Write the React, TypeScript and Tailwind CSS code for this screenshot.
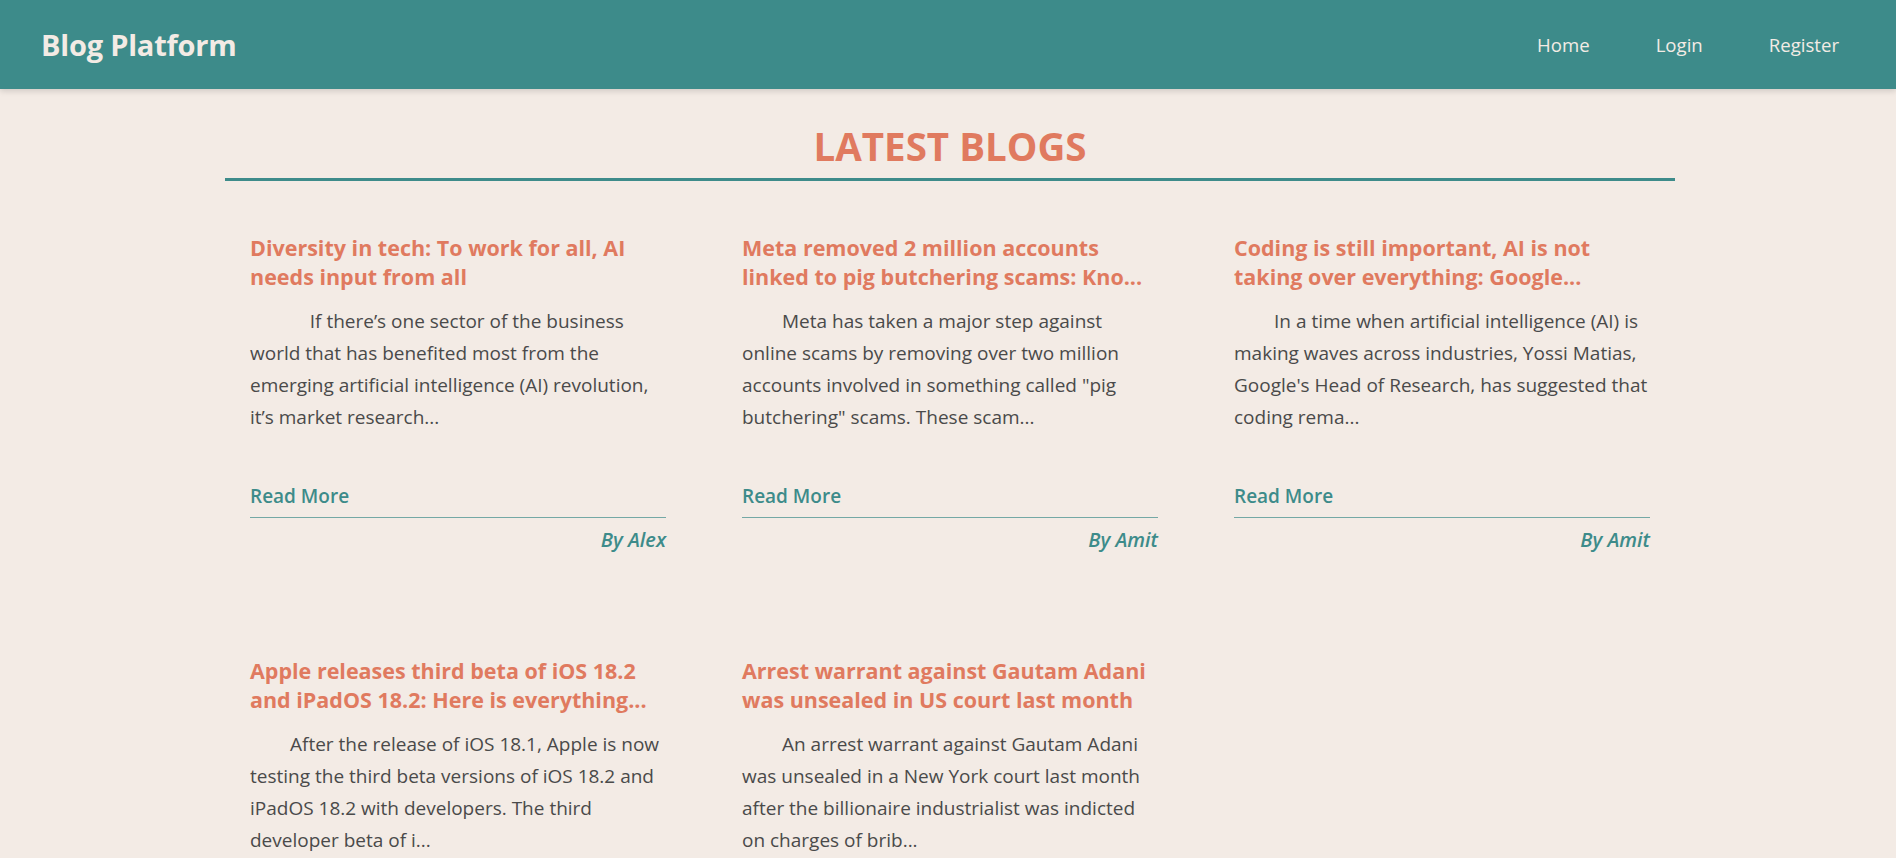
const blogs = [
  {
    title: 'Diversity in tech: To work for all, AI needs input from all',
    excerpt: '\u00a0\u00a0\u00a0\u00a0If there’s one sector of the business world that has benefited most from the emerging artificial intelligence (AI) revolution, it’s market research...',
    author: 'Alex',
  },
  {
    title: 'Meta removed 2 million accounts linked to pig butchering scams: Kno...',
    excerpt: 'Meta has taken a major step against online scams by removing over two million accounts involved in something called "pig butchering" scams. These scam...',
    author: 'Amit',
  },
  {
    title: 'Coding is still important, AI is not taking over everything: Google...',
    excerpt: "In a time when artificial intelligence (AI) is making waves across industries, Yossi Matias, Google's Head of Research, has suggested that coding rema...",
    author: 'Amit',
  },
  {
    title: 'Apple releases third beta of iOS 18.2 and iPadOS 18.2: Here is everything...',
    excerpt: 'After the release of iOS 18.1, Apple is now testing the third beta versions of iOS 18.2 and iPadOS 18.2 with developers. The third developer beta of i...',
    author: 'Alex',
  },
  {
    title: 'Arrest warrant against Gautam Adani was unsealed in US court last month',
    excerpt: 'An arrest warrant against Gautam Adani was unsealed in a New York court last month after the billionaire industrialist was indicted on charges of brib...',
    author: 'Amit',
  },
];

export default function App() {
  return (
    <div className="min-h-screen bg-[#f3ebe5] font-['Open_Sans',sans-serif]">
      {/* Navbar */}
      <header className="h-[89px] bg-[#3d8b8a] shadow-[0_2px_6px_rgba(0,0,0,0.15)] flex items-center justify-between pl-[41px] pr-[57px]">
        <h1 className="text-[29px] font-bold text-[#f3ebe5] tracking-[-0.2px]">Blog Platform</h1>
        <nav className="flex items-center gap-[66px] text-[18.6px] text-[#f3ebe5]">
          <a href="#">Home</a>
          <a href="#">Login</a>
          <a href="#">Register</a>
        </nav>
      </header>

      <main className="w-[1450px] ml-[225px]">
        <h2 className="pt-[31px] pb-[6px] text-center text-[38.5px] leading-[52px] font-bold text-[#e07a5f] border-b-[3px] border-[#3d8b8a]">
          LATEST BLOGS
        </h2>

        <div className="grid grid-cols-3 gap-x-[26px] gap-y-[52px] mt-[27px]">
          {blogs.map((blog, i) => (
            <div key={i} className="p-[25px]">
              <h3 className="text-[21.5px] leading-[29px] font-bold text-[#e07a5f]">{blog.title}</h3>
              <p className="mt-[14px] text-[19px] leading-[32px] text-[#4a4a4a] indent-[40px]">{blog.excerpt}</p>
              <a href="#" className="block mt-[49px] pb-[7px] text-[19px] leading-[28px] font-semibold text-[#3d8b8a] border-b border-[#3d8b8a]/70">
                Read More
              </a>
              <p className="mt-[8px] text-right text-[20px] leading-[28px] font-semibold italic text-[#3d8b8a]">By {blog.author}</p>
            </div>
          ))}
        </div>
      </main>
    </div>
  );
}
